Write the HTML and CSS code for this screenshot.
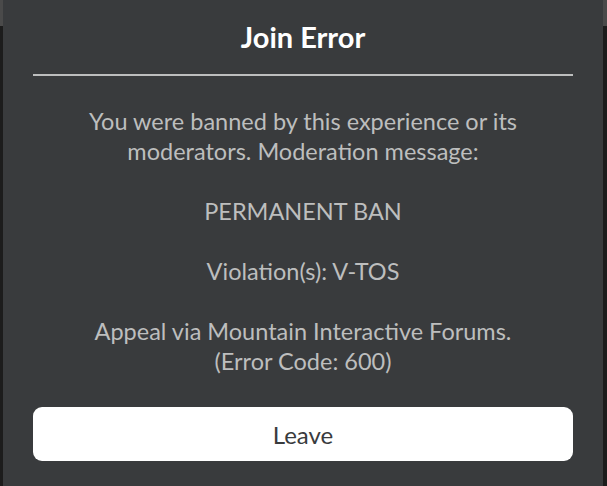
FILE: index.html
```html
<!DOCTYPE html>
<html lang="en">
<head>
    <meta charset="UTF-8">
    <meta name="viewport" content="width=device-width, initial-scale=1.0">
    <title>Join Error</title>
    <link rel="stylesheet" href="styles.css">
</head>
<body>
    <!-- error dialog -->
    <div class="dialog">
        <h1 class="dialog-title">Join Error</h1>
        <div class="divider"></div>

        <div class="dialog-message">
            <p>You were banned by this experience or its moderators. Moderation message:</p>
            <p>PERMANENT BAN</p>
            <p>Violation(s): V-TOS</p>
            <p>Appeal via Mountain Interactive Forums.<br>(Error Code: 600)</p>
        </div>

        <button class="leave-button">Leave</button>
    </div>
</body>
</html>
```

FILE: styles.css
```css
* {
    margin: 0;
    padding: 0;
    box-sizing: border-box;
}

html, body {
    height: 100%;
}

body {
    font-family: Lato, "Open Sans", sans-serif;
    background: linear-gradient(to bottom, #4a4a4a 0, #4a4a4a 26px, #1c1c1c 26px);
    overflow: hidden;
}

/* dialog panel */
.dialog {
    width: 600px;
    height: 486px;
    margin-left: 3px;
    padding: 19px 30px 25px;
    background-color: #393b3d;
    display: flex;
    flex-direction: column;
}

.dialog-title {
    font-size: 29px;
    font-weight: 700;
    line-height: 36px;
    color: #ffffff;
    text-align: center;
}

.divider {
    height: 2px;
    margin-top: 19px;
    background-color: #bdbebe;
}

.dialog-message {
    margin-top: 30px;
    font-size: 23.5px;
    line-height: 30px;
    color: #bdbebe;
    text-align: center;
}

.dialog-message p + p {
    margin-top: 30px;
}

/* leave button */
.leave-button {
    margin-top: auto;
    height: 54px;
    border: none;
    border-radius: 9px;
    background-color: #ffffff;
    color: #393b3d;
    font-family: inherit;
    font-size: 24px;
    cursor: pointer;
}
```
